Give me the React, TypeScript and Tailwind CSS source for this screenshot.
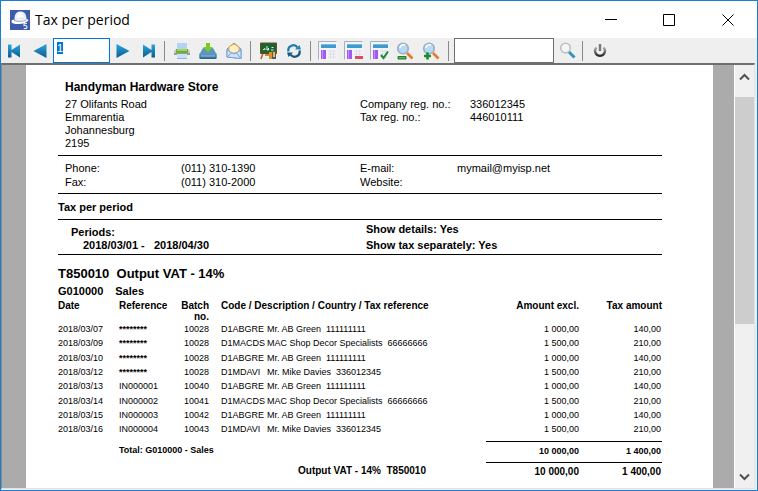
import { useEffect, useRef, type ReactNode } from "react";

function ToolButton({ label, children }: { label: string; children: ReactNode }) {
  return (
    <button
      type="button"
      aria-label={label}
      title={label}
      className="flex h-6 w-[26px] shrink-0 items-center justify-center"
    >
      {children}
    </button>
  );
}

function Separator() {
  return <div className="mx-[2px] h-5 w-px shrink-0 bg-[#8a8a8a]" />;
}

function Gradients() {
  return (
    <svg width="0" height="0" className="absolute" aria-hidden="true">
      <defs>
        <linearGradient id="nav" x1="0" y1="0" x2="0" y2="1">
          <stop offset="0" stopColor="#2ba5dc" />
          <stop offset="1" stopColor="#0a5c92" />
        </linearGradient>
        <linearGradient id="drive" x1="0" y1="0" x2="0" y2="1">
          <stop offset="0" stopColor="#5f9cc4" />
          <stop offset="1" stopColor="#2a648e" />
        </linearGradient>
        <linearGradient id="power" x1="0" y1="0" x2="0" y2="1">
          <stop offset="0" stopColor="#b5b5b5" />
          <stop offset="1" stopColor="#252525" />
        </linearGradient>
      </defs>
    </svg>
  );
}

function HatIcon() {
  return (
    <svg width="20" height="20" viewBox="0 0 20 20">
      <rect width="20" height="20" fill="#3d5ba9" />
      <path d="M4.500 9C4.500 4 6.500 1.500 10.500 1.500S16 4 16.500 8.500v2c-3 1.500-9 2-12 1z" fill="#e9edf5" />
      <path d="M6.500 8C6.500 5 8 3 10 3s3 1.500 3.500 4z" fill="#fff" />
      <path d="M3 9.500c3 2.500 11 2 14-.5l1.500 1c-1 2.500-6 4-10.500 4-3.500 0-6.500-.5-6.500-2.500 0-1 .8-1.500 1.500-2z" fill="#fff" />
      <path d="M4 10.500c3.500 1.500 9 1.200 12.500-.5" fill="none" stroke="#9eabc9" />
      <path d="M17 13.500h-3v2c2-.3 3 .3 3 1.500s-1.500 2-3.200 1.200" fill="none" stroke="#dfe5f3" strokeWidth="1.200" />
    </svg>
  );
}

function Arrow({ back, bar }: { back?: boolean; bar?: boolean }) {
  return (
    <svg width="14" height="16" viewBox="0 0 14 16" className={back ? "-scale-x-100" : ""}>
      <path d={bar ? "M1 1.500 9.500 7V1.500H13V14.500H9.500V9L1 14.500z" : "M.5 1 13.500 8 .5 15z"} fill="url(#nav)" />
    </svg>
  );
}

function PrinterIcon() {
  return (
    <svg width="18" height="18" viewBox="0 0 18 18">
      <path d="M4 1h10v6H4z" fill="#b3d3f5" />
      <path d="M1 9l2-2h12l2 2v4H1z" fill="#c9cbc6" />
      <path d="M3 7h12v4H3z" fill="#6eae2e" />
      <path d="M4 7h10v2H4z" fill="#a2d45c" />
      <path d="M1 11h16v2H1z" fill="#9a9d96" />
      <path d="M4 12h10v5H4z" fill="#c8e0fa" />
      <path d="M4 16h10v1H4z" fill="#8db7e4" />
    </svg>
  );
}

function SaveIcon() {
  return (
    <svg width="18" height="18" viewBox="0 0 18 18">
      <path d="M4 6h10l3.500 6v4q0 1-1 1h-15q-1 0-1-1v-4z" fill="#5b97bd" />
      <path d="M.5 11.500h17V16q0 1-1 1h-15q-1 0-1-1z" fill="url(#drive)" />
      <path d="M2 14h14" stroke="#9cc4dd" />
      <path d="M7 1h4v4h3l-5 5-5-5h3z" fill="#7ecb1f" />
    </svg>
  );
}

function MailIcon() {
  return (
    <svg width="16" height="18" viewBox="0 0 16 18">
      <path d="M1 7 8 1l7 6v9.500L1 15z" fill="#9fc4ea" stroke="#6f9bcf" />
      <path d="M3 4.500 8 2l5 3v6H3z" fill="#fff0c4" stroke="#e8a33c" />
      <path d="M1 8l7 4 7-4v8.500L1 15z" fill="#cfe2f8" stroke="#78a3d8" />
      <path d="M1 15l5-4.500M15 16.500 10 10.500" stroke="#78a3d8" />
    </svg>
  );
}

function BoardIcon() {
  return (
    <svg width="17" height="18" viewBox="0 0 17 18">
      <path d="M3 11 1 17M12 11l2 6" stroke="#b0622a" strokeWidth="1.500" />
      <path d="M.5 1h16v10.500H.5z" fill="#17652f" stroke="#6d4a20" />
      <path d="M3 8l2-1.500V8M7 4v4h1.500V6M11.500 5.500h2M11 8h2.500" fill="none" stroke="#e9f5ea" />
      <path d="M5 12h6v2H5z" fill="#d98436" />
      <path d="M9 10h3v7H9z" fill="#d9932b" />
      <path d="M12 9h4v8h-4z" fill="#545b66" />
      <path d="M13 10h2v5h-2z" fill="#f2b53d" />
    </svg>
  );
}

function RefreshIcon() {
  return (
    <svg width="16" height="16" viewBox="0 0 16 16">
      <path d="M2.500 8.500A5 5 0 0 1 11.500 4.500" fill="none" stroke="#2079b0" strokeWidth="2.200" />
      <path d="M13.500 7.500A5 5 0 0 1 4.500 11.500" fill="none" stroke="#135887" strokeWidth="2.200" />
      <path d="M9 6.500h6L13.500 2z" fill="#2386bf" />
      <path d="M7 9.500H1L2.500 14z" fill="#135887" />
    </svg>
  );
}

function TableIcon({ mark }: { mark?: "minus" | "check" }) {
  return (
    <svg width="19" height="19" viewBox="0 0 19 19">
      <path d="M1 1h18v18H1z" fill="#f3f4fa" />
      <path d="M.5 18.500V.5h18" fill="none" stroke="#a9aebd" />
      <path d="M3 3h15v4H3z" fill="#3d9bd0" />
      <path d="M3 3h15v1H3z" fill="#76bce2" />
      <path d="M3 9h5v9H3z" fill="#a259f2" />
      <path d="M4 9h1v9H4z" fill="#c391fa" />
      <path d="M10 10h8M10 13h8M10 16h8M12.500 9v9M15.500 9v9" stroke="#dcdee8" />
      {mark === "minus" && <path d="M11 15h8v3h-8z" fill="#d9505a" />}
      {mark === "check" && <path d="M11 14l2.500 3L18 10.500" fill="none" stroke="#23883a" strokeWidth="2" />}
    </svg>
  );
}

function ZoomIcon({ plus }: { plus?: boolean }) {
  return (
    <svg width="18" height="18" viewBox="0 0 18 18">
      <path d="M11 11l5.500 5.500" stroke="#e9782e" strokeWidth="2.600" />
      <circle cx="7" cy="6.500" r="5.300" fill="#b5dbf8" stroke="#a3aebb" strokeWidth="1.600" />
      <path d="M4 6a3.500 3.500 0 0 1 5-3" fill="none" stroke="#fff" strokeWidth="1.500" />
      {plus ? (
        <path d="M5.500 10.500v7M2 14h7" stroke="#1c8a35" strokeWidth="2.600" />
      ) : (
        <path d="M2 14.500h8v2.500H2z" fill="#57b558" stroke="#217d35" />
      )}
    </svg>
  );
}

function SearchIcon() {
  return (
    <svg width="17" height="17" viewBox="0 0 17 17">
      <path d="M9.500 9.500l6 6" stroke="#2f93c4" strokeWidth="3" />
      <circle cx="6.500" cy="6" r="4.800" fill="#f3f5f6" stroke="#bdbfc1" strokeWidth="1.600" />
    </svg>
  );
}

function PowerIcon() {
  return (
    <svg width="14" height="15" viewBox="0 0 14 15">
      <path d="M3.500 4.300a5 5 0 1 0 7 0" fill="none" stroke="url(#power)" strokeWidth="2.400" />
      <path d="M5.800 1h2.400v7H5.800z" fill="#777" />
    </svg>
  );
}

function TitleBar() {
  return (
    <header className="flex h-[37px] shrink-0 items-center bg-white pl-[9px]">
      <HatIcon />
      <h1 className="ml-[5px] flex-1 font-['Open_Sans','Noto_Sans',sans-serif] text-[14px] leading-5 text-black">
        Tax per period
      </h1>
      <button type="button" aria-label="Minimize" className="flex h-full w-[59px] items-center justify-center">
        <svg width="12" height="12" viewBox="0 0 12 12">
          <path d="M0 5.500h12" stroke="#000" />
        </svg>
      </button>
      <button type="button" aria-label="Maximize" className="flex h-full w-[58px] items-center justify-center">
        <svg width="12" height="12" viewBox="0 0 12 12">
          <path d="M.5.5h11v11H.5z" fill="none" stroke="#000" />
        </svg>
      </button>
      <button type="button" aria-label="Close" className="flex h-full w-[59px] items-center justify-center">
        <svg width="12" height="12" viewBox="0 0 12 12">
          <path d="M.5.5l11 11M11.500.5l-11 11" stroke="#000" />
        </svg>
      </button>
    </header>
  );
}

function Toolbar() {
  const pageInput = useRef<HTMLInputElement>(null);
  useEffect(() => {
    pageInput.current?.focus();
    pageInput.current?.select();
  }, []);

  return (
    <div role="toolbar" aria-label="Report" className="flex h-[25px] shrink-0 items-center bg-[#efefef]">
      <ToolButton label="First page"><Arrow back bar /></ToolButton>
      <ToolButton label="Previous page"><Arrow back /></ToolButton>
      <input
        ref={pageInput}
        aria-label="Page number"
        defaultValue="1"
        className="h-[25px] w-[57px] shrink-0 border border-[#0078d7] bg-white pb-[5px] pl-[3px] font-['Liberation_Sans',sans-serif] text-[11px] outline-none selection:bg-[#0078d7] selection:text-white"
      />
      <ToolButton label="Next page"><Arrow /></ToolButton>
      <ToolButton label="Last page"><Arrow bar /></ToolButton>
      <Separator />
      <div className="flex pr-px pl-[2px]">
        <ToolButton label="Print"><PrinterIcon /></ToolButton>
        <ToolButton label="Save"><SaveIcon /></ToolButton>
        <ToolButton label="Send by e-mail"><MailIcon /></ToolButton>
      </div>
      <Separator />
      <div className="flex pr-px pl-[2px]">
        <ToolButton label="Design"><BoardIcon /></ToolButton>
        <ToolButton label="Refresh"><RefreshIcon /></ToolButton>
      </div>
      <Separator />
      <div className="flex pr-[2px] pl-px">
        <ToolButton label="Table"><TableIcon /></ToolButton>
        <ToolButton label="Remove table"><TableIcon mark="minus" /></ToolButton>
        <ToolButton label="Apply table"><TableIcon mark="check" /></ToolButton>
        <ToolButton label="Zoom out"><ZoomIcon /></ToolButton>
        <ToolButton label="Zoom in"><ZoomIcon plus /></ToolButton>
      </div>
      <Separator />
      <input
        type="search"
        aria-label="Search report"
        className="ml-[3px] h-[25px] w-[100px] shrink-0 border border-[#6f6f6f] bg-white px-1 text-[11px] outline-none"
      />
      <ToolButton label="Search"><SearchIcon /></ToolButton>
      <Separator />
      <div className="flex pl-[2px]">
        <ToolButton label="Close report"><PowerIcon /></ToolButton>
      </div>
    </div>
  );
}

const stars = "********";
const green = { code: "D1ABGRE", name: "Mr. AB Green  111111111", excl: "1 000,00", tax: "140,00" };
const mac = { code: "D1MACDS", name: "MAC Shop Decor Specialists  66666666", excl: "1 500,00", tax: "210,00" };
const mike = { code: "D1MDAVI", name: "Mr. Mike Davies  336012345", excl: "1 500,00", tax: "210,00" };

const rows = [
  { date: "2018/03/07", ref: stars, batch: "10028", ...green },
  { date: "2018/03/09", ref: stars, batch: "10028", ...mac },
  { date: "2018/03/10", ref: stars, batch: "10028", ...green },
  { date: "2018/03/12", ref: stars, batch: "10028", ...mike },
  { date: "2018/03/13", ref: "IN000001", batch: "10040", ...green },
  { date: "2018/03/14", ref: "IN000002", batch: "10041", ...mac },
  { date: "2018/03/15", ref: "IN000003", batch: "10042", ...green },
  { date: "2018/03/16", ref: "IN000004", batch: "10043", ...mike },
];

function TaxTable() {
  return (
    <table className="w-full table-fixed border-collapse text-[9px]">
      <colgroup>
        <col className="w-[61px]" />
        <col className="w-[51px]" />
        <col className="w-[39px]" />
        <col />
        <col className="w-[93px]" />
        <col className="w-[83px]" />
      </colgroup>
      <thead>
        <tr className="h-[22px] text-left align-top text-[10px] leading-[11px] *:p-0">
          <th>Date</th>
          <th>Reference</th>
          <th className="pl-2! text-right">Batch no.</th>
          <th className="pl-3!">Code / Description / Country / Tax reference</th>
          <th className="text-right">Amount excl.</th>
          <th className="text-right">Tax amount</th>
        </tr>
      </thead>
      <tbody className="leading-[14px]">
        {rows.map((row) => (
          <tr key={row.date} className="h-[14px] align-top nth-[3n+2]:h-[15px] *:p-0">
            <td>{row.date}</td>
            <td className={row.ref === stars ? "font-bold" : ""}>{row.ref}</td>
            <td className="text-right">{row.batch}</td>
            <td className="pl-3! whitespace-pre">
              <span className="inline-block w-[46px]">{row.code}</span>
              {row.name}
            </td>
            <td className="text-right">{row.excl}</td>
            <td className="pr-px! text-right">{row.tax}</td>
          </tr>
        ))}
      </tbody>
      <tfoot className="font-bold">
        <tr className="h-[4px]">
          <td colSpan={6} className="p-0" />
        </tr>
        <tr className="h-[21px] align-top leading-[18px] *:p-0">
          <td />
          <td colSpan={3}>Total: G010000 - Sales</td>
          <td className="border-t border-black text-right">10 000,00</td>
          <td className="border-t border-black pr-px! text-right">1 400,00</td>
        </tr>
        <tr className="h-[21px] align-top text-[10px] leading-[18px] *:p-0">
          <td colSpan={4} className="pr-[60px]! text-right">Output VAT - 14%&nbsp; T850010</td>
          <td className="border-t border-black text-right">10 000,00</td>
          <td className="border-t border-black pr-px! text-right">1 400,00</td>
        </tr>
      </tfoot>
    </table>
  );
}

function Report() {
  return (
    <article className="min-w-0 flex-1 overflow-hidden bg-white pt-[13px] pr-[51px] pl-8 font-['Liberation_Sans',Arial,sans-serif] text-[11px] text-black">
      <section className="border-b border-black px-[7px] pb-[5px]">
        <h2 className="text-[12px] leading-[18px] font-bold">Handyman Hardware Store</h2>
        <div className="grid grid-cols-2 pt-[2px] leading-[13px]">
          <address className="not-italic">
            27 Olifants Road
            <br />
            Emmarentia
            <br />
            Johannesburg
            <br />
            2195
          </address>
          <dl className="grid grid-cols-[110px_1fr] content-start">
            <dt>Company reg. no.:</dt>
            <dd>336012345</dd>
            <dt>Tax reg. no.:</dt>
            <dd>446010111</dd>
          </dl>
        </div>
      </section>

      <section className="grid grid-cols-2 border-b border-black px-[7px] pt-[5px] pb-[4px] leading-[14px]">
        <dl className="grid grid-cols-[116px_1fr]">
          <dt>Phone:</dt>
          <dd>(011) 310-1390</dd>
          <dt>Fax:</dt>
          <dd>(011) 310-2000</dd>
        </dl>
        <dl className="grid grid-cols-[97px_1fr]">
          <dt>E-mail:</dt>
          <dd>mymail@myisp.net</dd>
          <dt>Website:</dt>
          <dd />
        </dl>
      </section>

      <h3 className="border-b border-black pt-[6px] pb-[5px] leading-[14px] font-bold">Tax per period</h3>

      <section className="grid grid-cols-2 border-b border-black pr-[7px] pl-[13px] leading-[13px] font-bold">
        <div className="pt-[6px]">
          <p>Periods:</p>
          <p className="pl-3 whitespace-pre">2018/03/01 -   2018/04/30</p>
        </div>
        <div className="pt-px pb-px pl-[3px] leading-[16px]">
          <p>Show details: Yes</p>
          <p>Show tax separately: Yes</p>
        </div>
      </section>

      <h3 className="pt-[10px] text-[13px] leading-[18px] font-bold whitespace-pre">T850010  Output VAT - 14%</h3>
      <h4 className="flex gap-3 pb-px leading-[16px] font-bold">
        <span>G010000</span>
        <span>Sales</span>
      </h4>
      <TaxTable />
    </article>
  );
}

function ScrollBar() {
  return (
    <div className="flex w-5 shrink-0 flex-col border-l border-white bg-[#f0f0f0]">
      <button type="button" aria-label="Scroll up" className="flex h-8 shrink-0 justify-center pt-2">
        <svg width="11" height="8" viewBox="0 0 11 8">
          <path d="M1 6.500 5.500 2 10 6.500" fill="none" stroke="#505050" strokeWidth="2" />
        </svg>
      </button>
      <div className="flex-1">
        <div className="h-[63%] bg-[#cdcdcd]" />
      </div>
      <button type="button" aria-label="Scroll down" className="flex h-[30px] shrink-0 justify-center pt-[15px]">
        <svg width="11" height="8" viewBox="0 0 11 8">
          <path d="M1 1.500 5.500 6 10 1.500" fill="none" stroke="#505050" strokeWidth="2" />
        </svg>
      </button>
    </div>
  );
}

export default function App() {
  return (
    <div className="flex h-screen flex-col border border-[#1a7fd0] bg-[#efefef]">
      <Gradients />
      <TitleBar />
      <Toolbar />
      <main className="mr-[2px] mb-px flex min-h-0 flex-1 border border-t-2 border-[#e3e3e3] border-t-[#6e6e6e] border-l-[#8a8a8a] bg-white">
        <div className="w-6 shrink-0 bg-[#ababab]" />
        <Report />
        <div className="w-[21px] shrink-0 bg-[#ababab]" />
        <ScrollBar />
      </main>
    </div>
  );
}
